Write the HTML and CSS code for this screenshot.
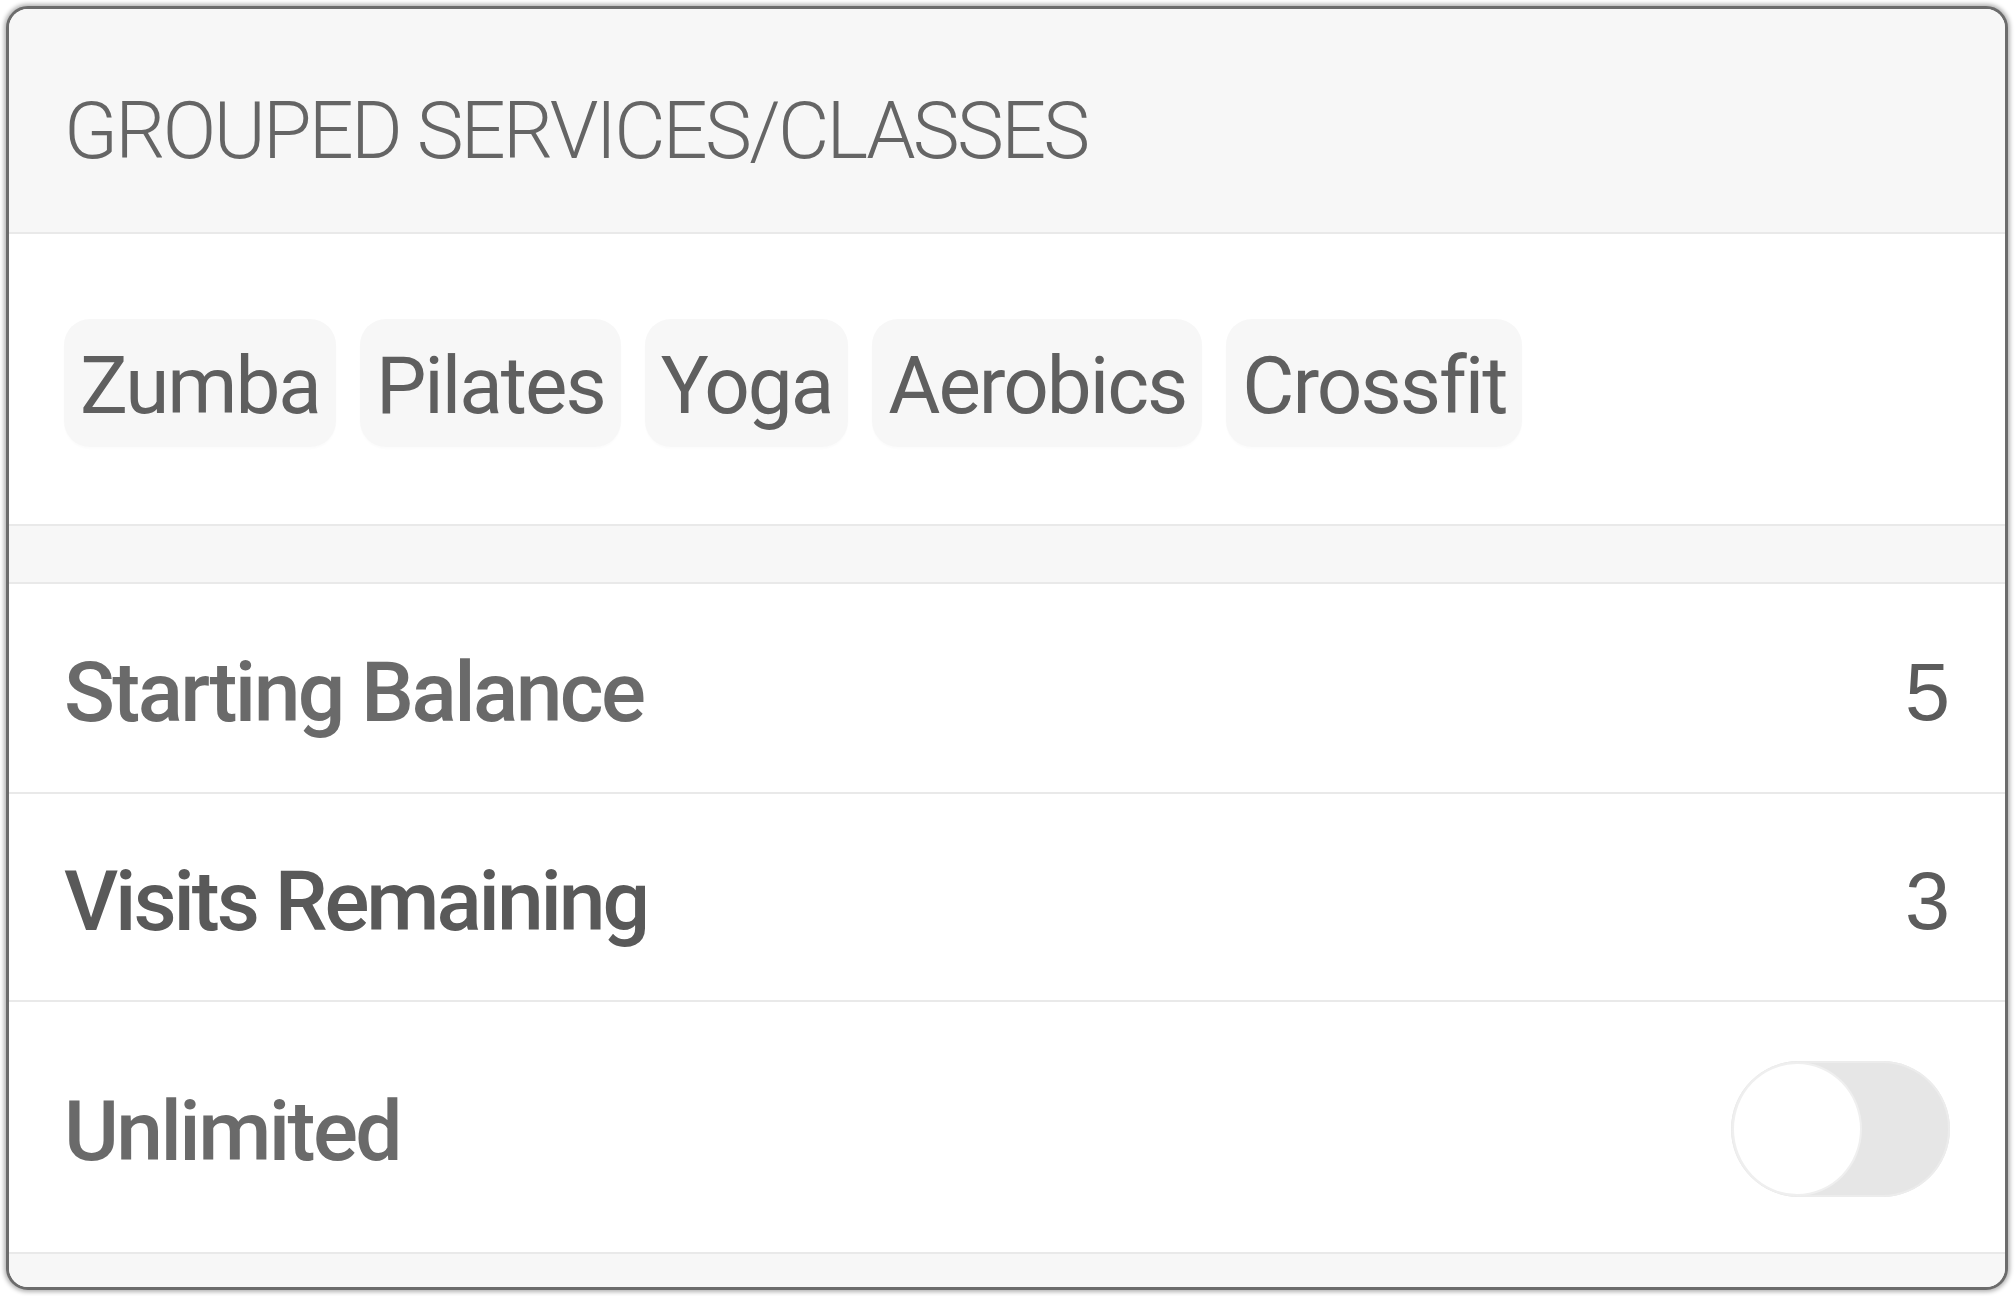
FILE: index.html
```html
<!DOCTYPE html>
<html lang="en">
<head>
<meta charset="utf-8">
<title>Grouped services</title>
<link rel="stylesheet" href="styles.css">
</head>
<body>
<div class="card">
  <div class="header"><h1 class="title">GROUPED SERVICES/CLASSES</h1></div>
  <div class="tags">
    <span class="tag">Zumba</span>
    <span class="tag">Pilates</span>
    <span class="tag">Yoga</span>
    <span class="tag">Aerobics</span>
    <span class="tag">Crossfit</span>
  </div>
  <div class="spacer"></div>
  <div class="row row-a"><span class="label">Starting Balance</span><span class="value">5</span></div>
  <div class="row row-b"><span class="label label-dark">Visits Remaining</span><span class="value">3</span></div>
  <div class="row row-c"><span class="label">Unlimited</span><span class="toggle"><span class="knob"></span></span></div>
  <div class="footer"></div>
</div>
</body>
</html>
```
FILE: styles.css
```css
html, body {
  margin: 0;
  padding: 0;
  background: #ffffff;
}
body {
  padding: 6px;
  font-family: Roboto, "Liberation Sans", sans-serif;
  font-variant-ligatures: none;
}
.card {
  box-sizing: border-box;
  width: 2002px;
  height: 1284px;
  border: 3px solid #6c6c6c;
  border-radius: 22px;
  overflow: hidden;
  background: #ffffff;
  box-shadow: 0 0 4px 2px rgba(0,0,0,0.3);
  display: flex;
  flex-direction: column;
}
.header {
  flex: none;
  box-sizing: border-box;
  height: 225px;
  background: #f7f7f7;
  border-bottom: 2px solid #e9e9e9;
  display: flex;
  align-items: center;
  padding: 22px 55px 0;
}
.title {
  margin: 0;
  font-weight: 300;
  font-size: 79px;
  color: #656565;
  letter-spacing: -2.7px;
  line-height: 1;
}
.tags {
  flex: none;
  box-sizing: border-box;
  height: 292px;
  padding: 85px 55px 0;
  border-bottom: 2px solid #e9e9e9;
  display: flex;
  gap: 24px;
  align-items: flex-start;
}
.tag {
  box-sizing: border-box;
  height: 128px;
  padding: 6px 16px 0;
  border-radius: 26px;
  background: #f7f7f7;
  font-size: 80px;
  font-weight: 400;
  color: #5f5f5f;
  letter-spacing: -2px;
  display: flex;
  align-items: center;
  line-height: 1;
  box-shadow: 0 2px 2px rgba(0,0,0,0.015);
}
.spacer {
  flex: none;
  height: 56px;
  background: #f7f7f7;
  border-bottom: 2px solid #e9e9e9;
}
.row {
  flex: none;
  display: flex;
  align-items: center;
  justify-content: space-between;
  padding: 0 55px;
  border-bottom: 2px solid #e9e9e9;
}
.row-a { height: 208px; }
.row-b { height: 206px; }
.row-c { height: 250px; }
.label {
  margin-top: 10px;
  font-size: 84px;
  font-weight: 500;
  color: #6a6a6a;
  letter-spacing: -2.6px;
  line-height: 1;
}
.label-dark {
  color: #595959;
  letter-spacing: -3.1px;
}
.value {
  margin-top: 8px;
  font-family: "Liberation Sans", Arial, sans-serif;
  font-size: 81px;
  color: #5c5c5c;
  line-height: 1;
}
.toggle {
  position: relative;
  margin-top: 4px;
  width: 219px;
  height: 136px;
  border-radius: 68px;
  background: #e6e6e6;
  box-shadow: inset 0 0 0 2px #ececec;
}
.knob {
  position: absolute;
  left: 3px;
  top: 3px;
  width: 126px;
  height: 130px;
  border-radius: 50%;
  background: #ffffff;
  box-shadow: 0 0 0 2px #efefef;
}
.footer {
  flex: 1;
  background: #f7f7f7;
}
```
